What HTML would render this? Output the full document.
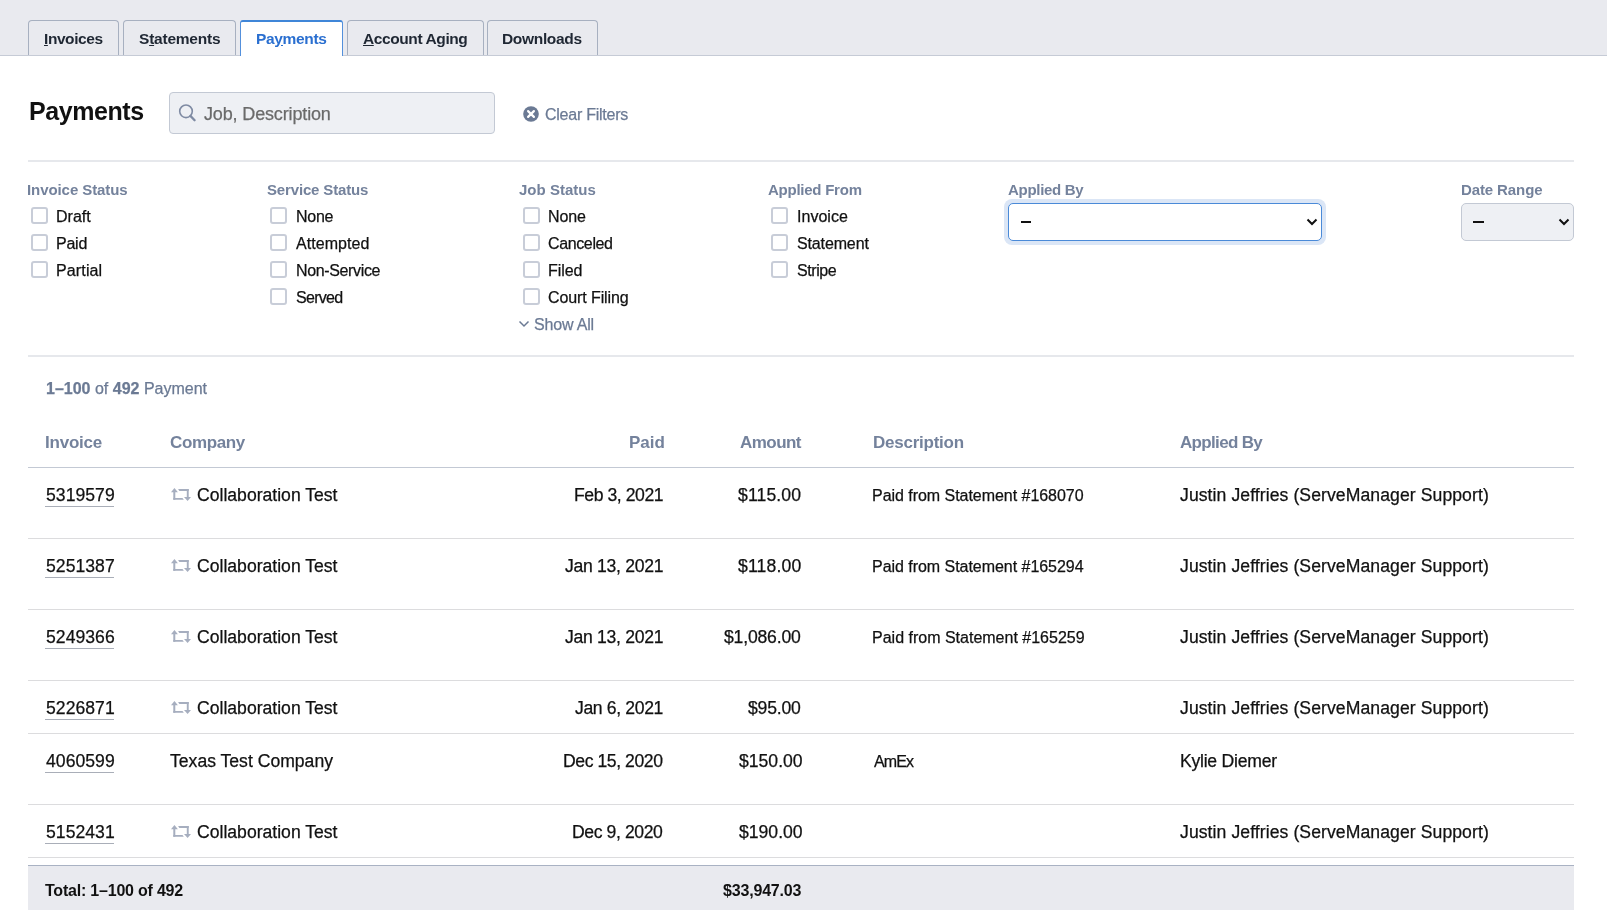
<!DOCTYPE html>
<html><head><meta charset="utf-8"><title>Payments</title>
<style>
html,body{margin:0;padding:0;background:#fff;}
body{width:1607px;height:910px;overflow:hidden;position:relative;font-family:"Liberation Sans",sans-serif;}
.t{position:absolute;white-space:nowrap;line-height:1;will-change:transform;}
.r{-webkit-text-stroke:0.25px currentColor;}
.t u{text-decoration-thickness:1px;text-underline-offset:1px;}
.s{position:absolute;}
</style></head><body>
<div class="s" style="left:0;top:0;width:1607px;height:55px;background:#e9eaef;"></div>
<div class="s" style="left:0;top:55px;width:1607px;height:1px;background:#c6cbd6;"></div>
<div class="s" style="left:28px;top:20px;width:91px;height:35px;background:#e9eaef;border:1px solid #a7b0c0;border-bottom:none;border-radius:4px 4px 0 0;box-sizing:border-box;"></div>
<div class="s" style="left:123px;top:20px;width:113px;height:35px;background:#e9eaef;border:1px solid #a7b0c0;border-bottom:none;border-radius:4px 4px 0 0;box-sizing:border-box;"></div>
<div class="s" style="left:240px;top:20px;width:103px;height:36px;background:#fff;border:1px solid #5390dc;border-top:2px solid #3f86d8;border-bottom:none;border-radius:3px 3px 0 0;box-sizing:border-box;"></div>
<div class="s" style="left:347px;top:20px;width:137px;height:35px;background:#e9eaef;border:1px solid #a7b0c0;border-bottom:none;border-radius:4px 4px 0 0;box-sizing:border-box;"></div>
<div class="s" style="left:487px;top:20px;width:111px;height:35px;background:#e9eaef;border:1px solid #a7b0c0;border-bottom:none;border-radius:4px 4px 0 0;box-sizing:border-box;"></div>
<div class="s" style="left:281px;top:45px;width:1.5px;height:1px;background:#2a6fd0;"></div>
<div class="s" style="left:169px;top:92px;width:326px;height:42px;background:#eef0f4;border:1px solid #c3c9d4;border-radius:4px;box-sizing:border-box;"></div>
<div class="s" style="left:28px;top:160px;width:1546px;height:2px;background:#e6e8ec;"></div>
<div class="s" style="left:28px;top:355px;width:1546px;height:2px;background:#e6e8ec;"></div>
<div class="s" style="left:31px;top:207px;width:17px;height:17px;border:2px solid #c8cdd8;border-radius:3px;box-sizing:border-box;background:#fff;"></div>
<div class="s" style="left:31px;top:234px;width:17px;height:17px;border:2px solid #c8cdd8;border-radius:3px;box-sizing:border-box;background:#fff;"></div>
<div class="s" style="left:31px;top:261px;width:17px;height:17px;border:2px solid #c8cdd8;border-radius:3px;box-sizing:border-box;background:#fff;"></div>
<div class="s" style="left:270px;top:207px;width:17px;height:17px;border:2px solid #c8cdd8;border-radius:3px;box-sizing:border-box;background:#fff;"></div>
<div class="s" style="left:270px;top:234px;width:17px;height:17px;border:2px solid #c8cdd8;border-radius:3px;box-sizing:border-box;background:#fff;"></div>
<div class="s" style="left:270px;top:261px;width:17px;height:17px;border:2px solid #c8cdd8;border-radius:3px;box-sizing:border-box;background:#fff;"></div>
<div class="s" style="left:270px;top:288px;width:17px;height:17px;border:2px solid #c8cdd8;border-radius:3px;box-sizing:border-box;background:#fff;"></div>
<div class="s" style="left:523px;top:207px;width:17px;height:17px;border:2px solid #c8cdd8;border-radius:3px;box-sizing:border-box;background:#fff;"></div>
<div class="s" style="left:523px;top:234px;width:17px;height:17px;border:2px solid #c8cdd8;border-radius:3px;box-sizing:border-box;background:#fff;"></div>
<div class="s" style="left:523px;top:261px;width:17px;height:17px;border:2px solid #c8cdd8;border-radius:3px;box-sizing:border-box;background:#fff;"></div>
<div class="s" style="left:523px;top:288px;width:17px;height:17px;border:2px solid #c8cdd8;border-radius:3px;box-sizing:border-box;background:#fff;"></div>
<div class="s" style="left:771px;top:207px;width:17px;height:17px;border:2px solid #c8cdd8;border-radius:3px;box-sizing:border-box;background:#fff;"></div>
<div class="s" style="left:771px;top:234px;width:17px;height:17px;border:2px solid #c8cdd8;border-radius:3px;box-sizing:border-box;background:#fff;"></div>
<div class="s" style="left:771px;top:261px;width:17px;height:17px;border:2px solid #c8cdd8;border-radius:3px;box-sizing:border-box;background:#fff;"></div>
<div class="s" style="left:1004px;top:199px;width:322px;height:46px;border-radius:8px;background:#dbe6f6;"></div>
<div class="s" style="left:1008px;top:203px;width:314px;height:38px;background:#fff;border:1.5px solid #4a8ad8;border-radius:5px;box-sizing:border-box;"></div>
<div class="s" style="left:1461px;top:203px;width:113px;height:38px;background:#eef0f4;border:1px solid #c3c9d4;border-radius:5px;box-sizing:border-box;"></div>
<div class="s" style="left:1021px;top:221.4px;width:10px;height:1.7px;background:#111;"></div>
<div class="s" style="left:1473px;top:221.4px;width:10.5px;height:1.7px;background:#111;"></div>
<div class="s" style="left:28px;top:467px;width:1546px;height:1px;background:#c3c9d4;"></div>
<div class="s" style="left:28px;top:538px;width:1546px;height:1px;background:#dcdcde;"></div>
<div class="s" style="left:28px;top:609px;width:1546px;height:1px;background:#dcdcde;"></div>
<div class="s" style="left:28px;top:680px;width:1546px;height:1px;background:#dcdcde;"></div>
<div class="s" style="left:28px;top:733px;width:1546px;height:1px;background:#dcdcde;"></div>
<div class="s" style="left:28px;top:804px;width:1546px;height:1px;background:#dcdcde;"></div>
<div class="s" style="left:28px;top:857px;width:1546px;height:1px;background:#dcdcde;"></div>
<div class="s" style="left:45px;top:506px;width:69px;height:1px;background:#a9aeb8;"></div>
<div class="s" style="left:45px;top:577px;width:69px;height:1px;background:#a9aeb8;"></div>
<div class="s" style="left:45px;top:648px;width:69px;height:1px;background:#a9aeb8;"></div>
<div class="s" style="left:45px;top:719px;width:69px;height:1px;background:#a9aeb8;"></div>
<div class="s" style="left:45px;top:772px;width:69px;height:1px;background:#a9aeb8;"></div>
<div class="s" style="left:45px;top:843px;width:69px;height:1px;background:#a9aeb8;"></div>
<div class="s" style="left:28px;top:865px;width:1546px;height:45px;background:#e9eaef;"></div>
<div class="s" style="left:28px;top:865px;width:1546px;height:1px;background:#a9b2c3;"></div>
<svg style="position:absolute;left:178px;top:103px" width="20" height="20" viewBox="0 0 20 20"><circle cx="8" cy="8.3" r="6.3" fill="none" stroke="#7f8ba3" stroke-width="1.6"/><line x1="12.4" y1="12.9" x2="16.6" y2="17.2" stroke="#7f8ba3" stroke-width="2.3" stroke-linecap="round"/></svg>
<svg style="position:absolute;left:522px;top:105px" width="18" height="18" viewBox="0 0 18 18"><circle cx="9" cy="9" r="7.8" fill="#6b7a94"/><path d="M6.1 6.1 L11.9 11.9 M11.9 6.1 L6.1 11.9" stroke="#fff" stroke-width="2.2" stroke-linecap="round"/></svg>
<svg style="position:absolute;left:1305px;top:216px" width="14" height="12" viewBox="0 0 14 12"><path d="M2.5 3.5 L7 8 L11.5 3.5" fill="none" stroke="#111" stroke-width="2"/></svg>
<svg style="position:absolute;left:1557px;top:216px" width="14" height="12" viewBox="0 0 14 12"><path d="M2.5 3.5 L7 8 L11.5 3.5" fill="none" stroke="#111" stroke-width="2"/></svg>
<svg style="position:absolute;left:517px;top:318px" width="14" height="12" viewBox="0 0 14 12"><path d="M2.5 3.5 L7 8 L11.5 3.5" fill="none" stroke="#6b7a94" stroke-width="1.5"/></svg>
<svg style="position:absolute;left:170px;top:487px" width="22" height="15" viewBox="0 0 22 15"><g fill="#a6aebf"><path d="M1 5.3 L4.4 0.9 L7.9 5.3 Z"/><rect x="3.3" y="5" width="2" height="7.8"/><path d="M3.3 10.9 L12.5 10.9 L13.8 12.8 L3.3 12.8 Z"/><path d="M14 10.1 L21 10.1 L17.6 14 Z"/><rect x="16.8" y="2" width="1.9" height="8.4"/><path d="M8.1 2 L18.7 2 L18.7 3.9 L9.3 3.9 Z"/></g></svg>
<svg style="position:absolute;left:170px;top:558px" width="22" height="15" viewBox="0 0 22 15"><g fill="#a6aebf"><path d="M1 5.3 L4.4 0.9 L7.9 5.3 Z"/><rect x="3.3" y="5" width="2" height="7.8"/><path d="M3.3 10.9 L12.5 10.9 L13.8 12.8 L3.3 12.8 Z"/><path d="M14 10.1 L21 10.1 L17.6 14 Z"/><rect x="16.8" y="2" width="1.9" height="8.4"/><path d="M8.1 2 L18.7 2 L18.7 3.9 L9.3 3.9 Z"/></g></svg>
<svg style="position:absolute;left:170px;top:629px" width="22" height="15" viewBox="0 0 22 15"><g fill="#a6aebf"><path d="M1 5.3 L4.4 0.9 L7.9 5.3 Z"/><rect x="3.3" y="5" width="2" height="7.8"/><path d="M3.3 10.9 L12.5 10.9 L13.8 12.8 L3.3 12.8 Z"/><path d="M14 10.1 L21 10.1 L17.6 14 Z"/><rect x="16.8" y="2" width="1.9" height="8.4"/><path d="M8.1 2 L18.7 2 L18.7 3.9 L9.3 3.9 Z"/></g></svg>
<svg style="position:absolute;left:170px;top:700px" width="22" height="15" viewBox="0 0 22 15"><g fill="#a6aebf"><path d="M1 5.3 L4.4 0.9 L7.9 5.3 Z"/><rect x="3.3" y="5" width="2" height="7.8"/><path d="M3.3 10.9 L12.5 10.9 L13.8 12.8 L3.3 12.8 Z"/><path d="M14 10.1 L21 10.1 L17.6 14 Z"/><rect x="16.8" y="2" width="1.9" height="8.4"/><path d="M8.1 2 L18.7 2 L18.7 3.9 L9.3 3.9 Z"/></g></svg>
<svg style="position:absolute;left:170px;top:824px" width="22" height="15" viewBox="0 0 22 15"><g fill="#a6aebf"><path d="M1 5.3 L4.4 0.9 L7.9 5.3 Z"/><rect x="3.3" y="5" width="2" height="7.8"/><path d="M3.3 10.9 L12.5 10.9 L13.8 12.8 L3.3 12.8 Z"/><path d="M14 10.1 L21 10.1 L17.6 14 Z"/><rect x="16.8" y="2" width="1.9" height="8.4"/><path d="M8.1 2 L18.7 2 L18.7 3.9 L9.3 3.9 Z"/></g></svg>
<div id="t0" class="t" style="left:44px;top:31px;font-size:15.5px;font-weight:700;color:#1f2733;letter-spacing:-0.429px;"><u>I</u>nvoices</div>
<div id="t1" class="t" style="left:139px;top:31px;font-size:15.5px;font-weight:700;color:#1f2733;letter-spacing:-0.222px;">S<u>t</u>atements</div>
<div id="t2" class="t" style="left:256px;top:31px;font-size:15.5px;font-weight:700;color:#2a6fd0;letter-spacing:-0.343px;">Payments</div>
<div id="t3" class="t" style="left:363px;top:31px;font-size:15.5px;font-weight:700;color:#1f2733;letter-spacing:-0.400px;"><u>A</u>ccount Aging</div>
<div id="t4" class="t" style="left:502px;top:31px;font-size:15.5px;font-weight:700;color:#1f2733;letter-spacing:-0.325px;">Downloads</div>
<div id="t5" class="t" style="left:29px;top:99px;font-size:25px;font-weight:700;color:#111111;letter-spacing:-0.429px;">Payments</div>
<div id="t6" class="t r" style="left:204px;top:105px;font-size:18px;font-weight:400;color:#6a6a6a;letter-spacing:-0.147px;">Job, Description</div>
<div id="t7" class="t r" style="left:545px;top:107px;font-size:16px;font-weight:400;color:#6b7a94;letter-spacing:-0.250px;">Clear Filters</div>
<div id="t8" class="t" style="left:27px;top:182px;font-size:15px;font-weight:700;color:#74829c;letter-spacing:-0.077px;">Invoice Status</div>
<div id="t9" class="t" style="left:267px;top:182px;font-size:15px;font-weight:700;color:#74829c;letter-spacing:-0.154px;">Service Status</div>
<div id="t10" class="t" style="left:519px;top:182px;font-size:15px;font-weight:700;color:#74829c;letter-spacing:0.022px;">Job Status</div>
<div id="t11" class="t" style="left:768px;top:182px;font-size:15px;font-weight:700;color:#74829c;letter-spacing:-0.245px;">Applied From</div>
<div id="t12" class="t" style="left:1008px;top:182px;font-size:15px;font-weight:700;color:#74829c;letter-spacing:-0.300px;">Applied By</div>
<div id="t13" class="t" style="left:1461px;top:182px;font-size:15px;font-weight:700;color:#74829c;letter-spacing:-0.111px;">Date Range</div>
<div id="t14" class="t r" style="left:56px;top:209px;font-size:16px;font-weight:400;color:#111111;">Draft</div>
<div id="t15" class="t r" style="left:56px;top:236px;font-size:16px;font-weight:400;color:#111111;letter-spacing:-0.233px;">Paid</div>
<div id="t16" class="t r" style="left:56px;top:263px;font-size:16px;font-weight:400;color:#111111;letter-spacing:0.133px;">Partial</div>
<div id="t17" class="t r" style="left:296px;top:209px;font-size:16px;font-weight:400;color:#111111;letter-spacing:-0.267px;">None</div>
<div id="t18" class="t r" style="left:296px;top:236px;font-size:16px;font-weight:400;color:#111111;letter-spacing:0.062px;">Attempted</div>
<div id="t19" class="t r" style="left:296px;top:263px;font-size:16px;font-weight:400;color:#111111;letter-spacing:-0.360px;">Non-Service</div>
<div id="t20" class="t r" style="left:296px;top:290px;font-size:16px;font-weight:400;color:#111111;letter-spacing:-0.720px;">Served</div>
<div id="t21" class="t r" style="left:548px;top:209px;font-size:16px;font-weight:400;color:#111111;letter-spacing:-0.100px;">None</div>
<div id="t22" class="t r" style="left:548px;top:236px;font-size:16px;font-weight:400;color:#111111;letter-spacing:-0.371px;">Canceled</div>
<div id="t23" class="t r" style="left:548px;top:263px;font-size:16px;font-weight:400;color:#111111;letter-spacing:-0.075px;">Filed</div>
<div id="t24" class="t r" style="left:548px;top:290px;font-size:16px;font-weight:400;color:#111111;letter-spacing:-0.100px;">Court Filing</div>
<div id="t25" class="t r" style="left:797px;top:209px;font-size:16px;font-weight:400;color:#111111;letter-spacing:0.033px;">Invoice</div>
<div id="t26" class="t r" style="left:797px;top:236px;font-size:16px;font-weight:400;color:#111111;letter-spacing:-0.137px;">Statement</div>
<div id="t27" class="t r" style="left:797px;top:263px;font-size:16px;font-weight:400;color:#111111;letter-spacing:-0.440px;">Stripe</div>
<div id="t28" class="t r" style="left:534px;top:317px;font-size:16px;font-weight:400;color:#6b7a94;letter-spacing:-0.171px;">Show All</div>
<div id="t29" class="t r" style="left:46px;top:381px;font-size:16px;font-weight:400;color:#6b7a94;"><b>1–100</b> of <b>492</b> Payment</div>
<div id="t30" class="t" style="left:45px;top:434px;font-size:17px;font-weight:700;color:#74829c;letter-spacing:-0.217px;">Invoice</div>
<div id="t31" class="t" style="left:170px;top:434px;font-size:17px;font-weight:700;color:#74829c;letter-spacing:-0.383px;">Company</div>
<div id="t32" class="t" style="right:942px;top:434px;font-size:17px;font-weight:700;color:#74829c;">Paid</div>
<div id="t33" class="t" style="right:806px;top:434px;font-size:17px;font-weight:700;color:#74829c;letter-spacing:-0.540px;">Amount</div>
<div id="t34" class="t" style="left:873px;top:434px;font-size:17px;font-weight:700;color:#74829c;letter-spacing:-0.240px;">Description</div>
<div id="t35" class="t" style="left:1180px;top:434px;font-size:17px;font-weight:700;color:#74829c;letter-spacing:-0.667px;">Applied By</div>
<div id="t36" class="t r" style="left:46px;top:487px;font-size:17.6px;font-weight:400;color:#111111;letter-spacing:0.033px;">5319579</div>
<div id="t37" class="t r" style="left:197px;top:487px;font-size:17.6px;font-weight:400;color:#111111;">Collaboration Test</div>
<div id="t38" class="t r" style="right:944px;top:487px;font-size:17.6px;font-weight:400;color:#111111;letter-spacing:-0.430px;">Feb 3, 2021</div>
<div id="t39" class="t r" style="right:806px;top:487px;font-size:17.6px;font-weight:400;color:#111111;letter-spacing:0.117px;">$115.00</div>
<div id="t40" class="t r" style="left:872px;top:488px;font-size:16px;font-weight:400;color:#111111;letter-spacing:-0.038px;">Paid from Statement #168070</div>
<div id="t41" class="t r" style="left:1180px;top:487px;font-size:17.6px;font-weight:400;color:#111111;letter-spacing:0.081px;">Justin Jeffries (ServeManager Support)</div>
<div id="t42" class="t r" style="left:46px;top:558px;font-size:17.6px;font-weight:400;color:#111111;letter-spacing:0.033px;">5251387</div>
<div id="t43" class="t r" style="left:197px;top:558px;font-size:17.6px;font-weight:400;color:#111111;">Collaboration Test</div>
<div id="t44" class="t r" style="right:944px;top:558px;font-size:17.6px;font-weight:400;color:#111111;letter-spacing:-0.291px;">Jan 13, 2021</div>
<div id="t45" class="t r" style="right:806px;top:558px;font-size:17.6px;font-weight:400;color:#111111;letter-spacing:0.167px;">$118.00</div>
<div id="t46" class="t r" style="left:872px;top:559px;font-size:16px;font-weight:400;color:#111111;letter-spacing:-0.038px;">Paid from Statement #165294</div>
<div id="t47" class="t r" style="left:1180px;top:558px;font-size:17.6px;font-weight:400;color:#111111;letter-spacing:0.081px;">Justin Jeffries (ServeManager Support)</div>
<div id="t48" class="t r" style="left:46px;top:629px;font-size:17.6px;font-weight:400;color:#111111;letter-spacing:0.033px;">5249366</div>
<div id="t49" class="t r" style="left:197px;top:629px;font-size:17.6px;font-weight:400;color:#111111;">Collaboration Test</div>
<div id="t50" class="t r" style="right:944px;top:629px;font-size:17.6px;font-weight:400;color:#111111;letter-spacing:-0.291px;">Jan 13, 2021</div>
<div id="t51" class="t r" style="right:806px;top:629px;font-size:17.6px;font-weight:400;color:#111111;letter-spacing:-0.188px;">$1,086.00</div>
<div id="t52" class="t r" style="left:872px;top:630px;font-size:16px;font-weight:400;color:#111111;">Paid from Statement #165259</div>
<div id="t53" class="t r" style="left:1180px;top:629px;font-size:17.6px;font-weight:400;color:#111111;letter-spacing:0.081px;">Justin Jeffries (ServeManager Support)</div>
<div id="t54" class="t r" style="left:46px;top:700px;font-size:17.6px;font-weight:400;color:#111111;letter-spacing:0.033px;">5226871</div>
<div id="t55" class="t r" style="left:197px;top:700px;font-size:17.6px;font-weight:400;color:#111111;">Collaboration Test</div>
<div id="t56" class="t r" style="right:944px;top:700px;font-size:17.6px;font-weight:400;color:#111111;letter-spacing:-0.360px;">Jan 6, 2021</div>
<div id="t57" class="t r" style="right:806px;top:700px;font-size:17.6px;font-weight:400;color:#111111;letter-spacing:-0.200px;">$95.00</div>
<div id="t58" class="t r" style="left:1180px;top:700px;font-size:17.6px;font-weight:400;color:#111111;letter-spacing:0.081px;">Justin Jeffries (ServeManager Support)</div>
<div id="t59" class="t r" style="left:46px;top:753px;font-size:17.6px;font-weight:400;color:#111111;letter-spacing:0.033px;">4060599</div>
<div id="t60" class="t r" style="left:170px;top:753px;font-size:17.6px;font-weight:400;color:#111111;">Texas Test Company</div>
<div id="t61" class="t r" style="right:944px;top:753px;font-size:17.6px;font-weight:400;color:#111111;letter-spacing:-0.427px;">Dec 15, 2020</div>
<div id="t62" class="t r" style="right:804px;top:753px;font-size:17.6px;font-weight:400;color:#111111;">$150.00</div>
<div id="t63" class="t r" style="left:874px;top:754px;font-size:16px;font-weight:400;color:#111111;letter-spacing:-0.900px;">AmEx</div>
<div id="t64" class="t r" style="left:1180px;top:753px;font-size:17.6px;font-weight:400;color:#111111;letter-spacing:-0.245px;">Kylie Diemer</div>
<div id="t65" class="t r" style="left:46px;top:824px;font-size:17.6px;font-weight:400;color:#111111;letter-spacing:0.033px;">5152431</div>
<div id="t66" class="t r" style="left:197px;top:824px;font-size:17.6px;font-weight:400;color:#111111;">Collaboration Test</div>
<div id="t67" class="t r" style="right:945px;top:824px;font-size:17.6px;font-weight:400;color:#111111;letter-spacing:-0.400px;">Dec 9, 2020</div>
<div id="t68" class="t r" style="right:804px;top:824px;font-size:17.6px;font-weight:400;color:#111111;">$190.00</div>
<div id="t69" class="t r" style="left:1180px;top:824px;font-size:17.6px;font-weight:400;color:#111111;letter-spacing:0.081px;">Justin Jeffries (ServeManager Support)</div>
<div id="t70" class="t" style="left:45px;top:883px;font-size:16px;font-weight:700;color:#111111;letter-spacing:-0.211px;">Total: 1–100 of 492</div>
<div id="t71" class="t" style="right:806px;top:883px;font-size:16px;font-weight:700;color:#111111;letter-spacing:-0.178px;">$33,947.03</div>
</body></html>
